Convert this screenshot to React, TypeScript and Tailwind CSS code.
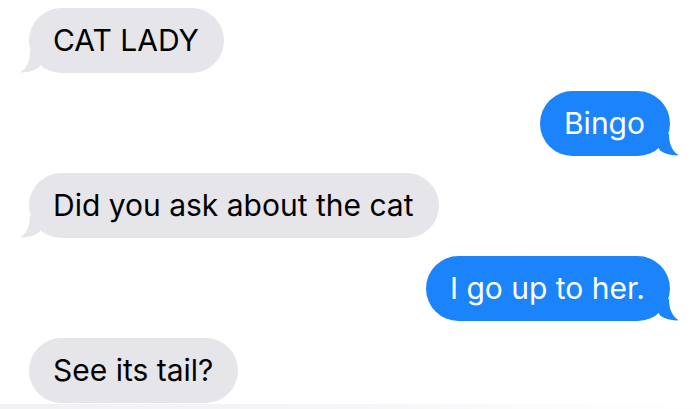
import React from 'react'

type Msg = { text: string; me: boolean; tail: boolean }

const messages: Msg[] = [
  { text: 'CAT LADY', me: false, tail: true },
  { text: 'Bingo', me: true, tail: true },
  { text: 'Did you ask about the cat', me: false, tail: true },
  { text: 'I go up to her.', me: true, tail: true },
  { text: 'See its tail?', me: false, tail: false },
]

function Tail({ me }: { me: boolean }) {
  return (
    <svg
      className={`absolute bottom-0 w-6 h-6 ${me ? '-right-[10px] -scale-x-100' : '-left-[10px]'}`}
      viewBox="0 0 24 24"
    >
      <path
        d="M 11 2 C 11 13 7 20 1 23.3 C 8 23.8 14 22.3 20 18.5 L 24 10 L 24 2 Z"
        fill={me ? '#1b84fb' : '#e5e5ea'}
      />
    </svg>
  )
}

function Bubble({ text, me, tail }: Msg) {
  return (
    <div className={`flex ${me ? 'justify-end pr-[30px]' : 'justify-start pl-[29px]'}`}>
      <div
        className={`relative h-[65px] flex items-center rounded-full pl-[24px] pr-[25px] text-[30px] ${
          me ? 'bg-[#1b84fb] text-white' : 'bg-[#e5e5ea] text-black'
        }`}
      >
        <span className="relative z-10">{text}</span>
        {tail && <Tail me={me} />}
      </div>
    </div>
  )
}

export default function App() {
  return (
    <div
      className="w-[700px] h-[409px] bg-white overflow-hidden flex flex-col"
      style={{ fontFamily: 'Inter, "Liberation Sans", sans-serif' }}
    >
      <div className="flex-1 min-h-0 flex flex-col gap-[17.5px] pt-[8px]">
        {messages.map((m, i) => (
          <Bubble key={i} {...m} />
        ))}
      </div>
      <div className="h-[5px] bg-gradient-to-r from-[#f1f1f3] via-[#f6f6f8] to-white" />
    </div>
  )
}
